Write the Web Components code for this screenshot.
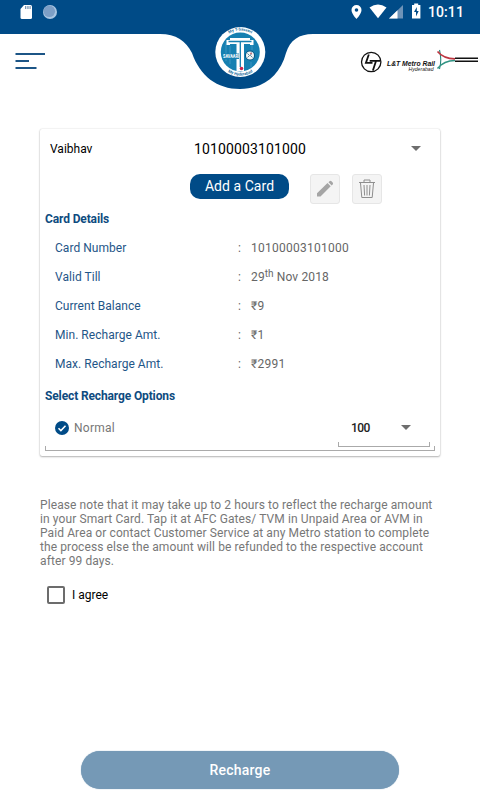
<!DOCTYPE html>
<html lang="en">
<head>
<meta charset="utf-8">
<title>Recharge</title>
<style>
html,body{margin:0;width:480px;height:800px;overflow:hidden;background:#fff}
body{font-family:Roboto,"Noto Sans",sans-serif;font-size:12px;color:#000}
</style>
</head>
<body>
<metro-app></metro-app>
<script>
function define(name, markup) {
  const template = document.createElement('template');
  template.innerHTML = markup;
  customElements.define(name, class extends HTMLElement {
    constructor() {
      super();
      this.attachShadow({ mode: 'open' }).append(template.content.cloneNode(true));
    }
  });
}

define('status-bar', `
<style>
:host{display:flex;align-items:center;justify-content:space-between;height:24px;padding:0 16px 0 19px;color:#fff;box-sizing:border-box}
svg{display:block}
.right{display:flex;align-items:center;gap:6px}
span{font-size:14px;font-weight:500;line-height:24px;letter-spacing:.1px}
</style>
<svg width="40" height="24"><path d="M5 5h6.500q1.500 0 1.500 1.500v11q0 1.500-1.500 1.500h-8.500q-1.500 0-1.500-1.500v-8.500z" fill="#fff"/><path d="M6 6h1.300v3h-1.300zM8.300 6h1.300v3h-1.300zM10.500 6h1.200v3h-1.200z" fill="#7b98b6"/><circle cx="31" cy="12" r="7" fill="#a9c6e2"/><circle cx="30.300" cy="11.300" r="5.800" fill="#7d9fc6"/></svg>
<div class="right">
<svg width="72" height="24" viewBox="350 0 72 24"><path d="M356.500 5a5 5 0 0 0-5 5c0 3.700 5 9 5 9s5-5.300 5-9a5 5 0 0 0-5-5zm0 3.200a1.800 1.800 0 1 1 0 3.600a1.800 1.800 0 0 1 0-3.600z" fill="#fff" fill-rule="evenodd"/><path d="M369.500 7.500Q378 1.500 386.500 7.500L378 18.200z" fill="#fff"/><path d="M389 18.500L403 5v13.500z" fill="#6e93b8"/><path d="M389 18.500L397.500 10.300v8.200z" fill="#fff"/><path d="M412 5h2.200V3.500h4V5h2.200v13.500h-8.400z" fill="#fff"/><path d="M416.800 7l-2.800 5h2V16.500l2.700-5.500h-1.900z" fill="#004b87"/></svg>
<span>10:11</span></div>`);

define('metro-badge', `
<style>:host{display:block;width:52px;height:52px}svg{display:block}text{font-family:Roboto,sans-serif;font-weight:700}</style>
<svg width="52" height="52" viewBox="0 0 52 52">
<circle cx="26.300" cy="26" r="25" fill="#fff"/><circle cx="26.300" cy="26" r="19.500" fill="#1680b1"/>
<path d="M12 17v18M16 20v18M38 19v5M37 36v5" stroke="#4a9fc8" stroke-width=".7"/>
<path d="M12.500 14H16v-2h20v2h3.500v5h-3.500v-1H30v27h-7.500V18H16v1h-3.500z" fill="#fff"/><path d="M14.500 15.500h23M26.300 16v25" fill="none" stroke="#1680b1" stroke-width="1.300"/>
<path d="M9 27.500h16v5.500H9z" fill="#1680b1"/>
<text x="9" y="32.200" font-size="5.500" fill="#fff" textLength="16" lengthAdjust="spacingAndGlyphs">SAVAARI</text>
<circle cx="36" cy="29.500" r="5" fill="#075482"/><circle cx="36" cy="29.500" r="4" fill="#f0f5f5"/><path d="M33.500 27.500l2 2-2 2M37.500 26.500l-1 3 2 2" fill="none" stroke="#3a6e86" stroke-width=".8"/><path d="M36 27l2 1" stroke="#d65f69"/>
<circle cx="27.500" cy="42.500" r="1.800" fill="#c9254d"/>
<path id="up" d="M4.800 26a21.500 21.500 0 0 1 43 0" fill="none"/><path id="dn" d="M2.800 26a23.500 23.500 0 0 0 47 0" fill="none"/>
<text font-size="4" fill="#1c6e9c"><textPath href="#up" startOffset="50%" text-anchor="middle">My T-Savaari</textPath></text>
<text font-size="4" fill="#1c6e9c"><textPath href="#dn" startOffset="50%" text-anchor="middle">My Hyderabad</textPath></text>
</svg>`);

define('metro-logo', `
<style>:host{display:block}svg{display:block}text{font-family:"Liberation Sans",Arial,sans-serif;font-style:italic}</style>
<svg width="120" height="30" viewBox="360 46 120 30">
<circle cx="371.200" cy="62" r="9.700" fill="none" stroke="#111" stroke-width="1.300"/>
<path d="M368.800 54.500L365.900 62.900H372.500M369.700 60.800H380M376 61L372.900 70.500" fill="none" stroke="#111" stroke-width="1.800"/>
<text x="387" y="65.500" font-size="8" font-weight="700" fill="#111" textLength="48" lengthAdjust="spacingAndGlyphs">L&amp;T Metro Rail</text>
<text x="408.500" y="71.300" font-size="6" fill="#222" textLength="25" lengthAdjust="spacingAndGlyphs">Hyderabad</text>
<path d="M439.500 50Q442 60 439.500 69" fill="none" stroke="#258579" stroke-width="1.100"/><path d="M437.500 68.500Q444 60.500 455 60.500" fill="none" stroke="#309383" stroke-width="1.500"/><path d="M437.500 51.500Q443.500 58.700 455 58.900" fill="none" stroke="#bd3540" stroke-width="1.600"/>
<path d="M455 58.200h23M455 61.200h23" stroke="#111" stroke-width="1.500"/>
</svg>`);

define('app-header', `
<style>
:host{display:grid;height:90px}
:host>*{grid-area:1/1}
.bg{display:block}
.col{display:flex;flex-direction:column}
.bar{display:grid;grid-template-columns:1fr 52px 1fr;align-items:start}
.menu{margin:28px 0 0 15px}
metro-badge{margin-top:2px}
metro-logo{justify-self:end;margin-top:22px}
</style>
<svg class="bg" width="480" height="90"><path d="M0 0H480V34H313C299 34 290 40 286 53C280 76 263 89 240 89S200 76 192 53C186 41 176 34 160 34H0z" fill="#004b87"/></svg>
<div class="col"><status-bar></status-bar>
<div class="bar"><svg class="menu" width="32" height="18"><path d="M.5 2H30M.5 9H14M.5 16H21.500" stroke="#1c5586" stroke-width="2"/></svg><metro-badge></metro-badge><metro-logo></metro-logo></div></div>`);

define('drop-arrow', `<style>:host{display:block;width:10px;height:5px}svg{display:block}</style><svg width="10" height="5"><path d="M0 0h10L5 5z" fill="#6e6e6e"/></svg>`);

define('icon-button', `<style>:host{display:flex;align-items:center;justify-content:center;width:30px;height:30px;box-sizing:border-box;background:#f4f4f4;border:1px solid #e6e6e6;border-radius:3px}</style><slot></slot>`);

define('section-title', `<style>:host{display:block;font-weight:700;color:#0e4b80;padding-left:5px;letter-spacing:-.13px}</style><slot></slot>`);

define('detail-row', `
<style>
:host{display:grid;grid-template-columns:183px 13px 1fr;height:29px;line-height:29px;padding-left:15px;color:#666;letter-spacing:.26px}
.label{color:#1f5688;letter-spacing:.04px}
</style><span class="label"><slot name="label"></slot></span><span>:</span><span><slot></slot></span>`);

define('card-panel', `
<style>
:host{display:flex;flex-direction:column;width:400px;height:327px;background:#fff;border-radius:2px;box-shadow:0 1px 2px rgba(0,0,0,.28),0 0 1.500px rgba(0,0,0,.2)}
.pick{display:grid;grid-template-columns:144px 217px auto;align-items:center;height:40px;padding-left:10px}
.pick drop-arrow{margin-top:-2px}
.num{font-size:14px;letter-spacing:.14px}
.acts{display:flex;height:40px;padding:5px 0 0 150px;box-sizing:border-box}
.add{width:99px;height:25px;border-radius:10px;background:#004b87;color:#fff;font-size:14px;line-height:25px;text-align:center;letter-spacing:.05px;margin-right:21px}
.edit{margin-right:12px}
.h1{height:25px;line-height:20px}
.h2{height:36px;line-height:34px}
sup{font-size:10px;line-height:0;vertical-align:4px;letter-spacing:0}
.date{letter-spacing:.15px}
.opt{display:flex;height:32px;justify-content:space-between;padding:0 10px 0 15px}
.norm{display:flex;height:26px;align-items:center;gap:5px;color:#777;letter-spacing:.25px}
.amt{display:flex;align-items:center;width:92px;height:27px;box-sizing:border-box;padding:0 19px 2px 13px;justify-content:space-between;color:#222;font-weight:500;letter-spacing:-.6px}
.tick{box-sizing:border-box;height:5px;border:1px solid #aaa;border-top:0}
.wide{margin:-1px 5px 0}
</style>
<div class="pick"><span>Vaibhav</span><span class="num">10100003101000</span><drop-arrow></drop-arrow></div>
<div class="acts"><div class="add">Add a Card</div>
<icon-button class="edit"><svg width="20" height="20"><path d="M2 14.300L12.500 4l3.200 3.300L5.500 17.500H2zM13.500 3.200l1-1q1-.8 2 .1l1.200 1.300q.8 1 0 1.800l-1 1z" fill="#a5a5a5"/></svg></icon-button>
<icon-button><svg width="20" height="22" fill="none" stroke="#8e8e8e" stroke-width="1"><path d="M2 4.500h16M7 4.500V2h6v2.500M3.500 5l1.300 14.500h10.400L16.500 5M7 7l.6 10.500M10 7v10.500M13 7l-.6 10.500"/></svg></icon-button></div>
<section-title class="h1">Card Details</section-title>
<detail-row><span slot="label">Card Number</span>10100003101000</detail-row>
<detail-row><span slot="label">Valid Till</span><span class="date">29<sup>th</sup> Nov 2018</span></detail-row>
<detail-row><span slot="label">Current Balance</span>₹9</detail-row>
<detail-row><span slot="label">Min. Recharge Amt.</span>₹1</detail-row>
<detail-row><span slot="label">Max. Recharge Amt.</span>₹2991</detail-row>
<section-title class="h2">Select Recharge Options</section-title>
<div class="opt"><div class="norm"><svg width="14" height="14"><circle cx="7" cy="7" r="7" fill="#004b87"/><path d="M3.500 7.200l2.400 2.400 4.600-4.800" fill="none" stroke="#fff" stroke-width="1.500"/></svg><span>Normal</span></div>
<div><div class="amt"><span>100</span><drop-arrow></drop-arrow></div><div class="tick"></div></div></div>
<div class="tick wide"></div>`);

define('metro-app', `
<style>
:host{display:flex;flex-direction:column;width:480px;height:800px}
card-panel{margin:39px 0 0 40px}
p{margin:42px 0 0 40px;color:#777;line-height:14px;letter-spacing:.1px;white-space:nowrap}
.agree{display:flex;align-items:center;gap:7px;margin:18px 0 0 47px;height:18px}
.box{box-sizing:border-box;width:18px;height:18px;border:2px solid #6c6c6c;border-radius:2px}
.go{margin:147px 0 0 81px;width:318px;height:38px;border-radius:19px;background:#7599b6;color:#fff;font-size:14px;font-weight:500;line-height:38px;text-align:center;letter-spacing:.2px;box-shadow:0 0 1px #7599b6}
</style>
<app-header></app-header>
<card-panel></card-panel>
<p>Please note that it may take up to 2 hours to reflect the recharge amount<br>in your Smart Card. Tap it at AFC Gates/ TVM in Unpaid Area or AVM in<br>Paid Area or contact Customer Service at any Metro station to complete<br>the process else the amount will be refunded to the respective account<br>after 99 days.</p>
<div class="agree"><div class="box"></div><span>I agree</span></div>
<div class="go">Recharge</div>`);
</script>
</body>
</html>
